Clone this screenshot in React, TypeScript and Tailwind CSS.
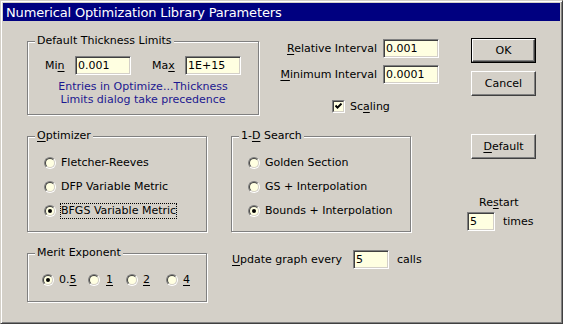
import { ReactNode } from "react";

function Field({ value, className = "" }: { value: string; className?: string }) {
  return (
    <div
      className={`flex h-[19px] items-center bg-[#ffffe1] pl-[2px] border border-t-[#808080] border-l-[#808080] border-b-white border-r-white shadow-[inset_1px_1px_0_#404040,inset_-1px_-1px_0_#d4d0c8] ${className}`}
    >
      {value}
    </div>
  );
}

function Radio({ checked }: { checked?: boolean }) {
  return (
    <div className="size-[12px] shrink-0 rounded-full border border-t-[#808080] border-l-[#808080] border-b-white border-r-white">
      <div className="flex size-full items-center justify-center rounded-full border border-t-[#404040] border-l-[#404040] border-b-[#d4d0c8] border-r-[#d4d0c8] bg-[#ffffe1]">
        {checked && <div className="size-[4px] rounded-full bg-black" />}
      </div>
    </div>
  );
}

function Checkbox({ checked }: { checked?: boolean }) {
  return (
    <div className="size-[13px] shrink-0 border border-t-[#808080] border-l-[#808080] border-b-white border-r-white">
      <div className="flex size-full items-center justify-center border border-t-[#404040] border-l-[#404040] border-b-[#d4d0c8] border-r-[#d4d0c8] bg-[#ffffe1]">
        {checked && (
          <svg width="7" height="7" viewBox="0 0 7 7">
            <path d="M0.5 2.5 L2.5 4.6 L6.5 0.6" stroke="black" strokeWidth="2" fill="none" />
          </svg>
        )}
      </div>
    </div>
  );
}

function Button({ children, isDefault }: { children: ReactNode; isDefault?: boolean }) {
  const face = (
    <div className="flex size-full items-center justify-center border border-t-white border-l-white border-b-[#404040] border-r-[#404040] shadow-[inset_-1px_-1px_0_#808080]">
      {children}
    </div>
  );
  if (isDefault) {
    return <div className="h-[25px] w-[65px] border border-black">{face}</div>;
  }
  return <div className="h-[25px] w-[65px]">{face}</div>;
}

function Group({
  label,
  className = "",
  children,
}: {
  label: ReactNode;
  className?: string;
  children?: ReactNode;
}) {
  return (
    <div
      className={`relative shrink-0 border border-[#808080] shadow-[inset_1px_1px_0_#fff,1px_1px_0_#fff] ${className}`}
    >
      <div className="absolute left-[7px] top-[-8px] bg-[#d4d0c8] px-[2px] leading-[13px] whitespace-nowrap">
        {label}
      </div>
      {children}
    </div>
  );
}

function RadioRow({
  label,
  checked,
  focused,
}: {
  label: string;
  checked?: boolean;
  focused?: boolean;
}) {
  return (
    <div className="flex h-[24px] items-center gap-[4px]">
      <Radio checked={checked} />
      <span
        className={`border leading-[14px] whitespace-nowrap ${
          focused ? "border-dotted border-black" : "border-transparent"
        }`}
      >
        {label}
      </span>
    </div>
  );
}

function U({ children }: { children: ReactNode }) {
  return <span className="underline underline-offset-[2px]">{children}</span>;
}

export default function App() {
  return (
    <div className="h-[324px] w-[563px] bg-[#d4d0c8] p-[2px] border border-t-[#d4d0c8] border-l-[#d4d0c8] border-b-[#404040] border-r-[#404040] shadow-[inset_1px_1px_0_#fff,inset_-1px_-1px_0_#808080] font-['DejaVu_Sans',sans-serif] text-[11px] leading-[13px] text-black">
      <div className="flex h-[18px] items-center bg-[#000080] pl-[3px] text-[13px] leading-[15px] tracking-[-0.15px] text-white whitespace-nowrap">
        Numerical Optimization Library Parameters
      </div>

      <div className="pl-[24px] pt-[17px]">
        {/* top row */}
        <div className="flex h-[96px] items-start">
          <Group label="Default Thickness Limits" className="mt-[3px] h-[74px] w-[232px]">
            <div className="flex items-center pl-[17px] pt-[14px]">
              <span className="w-[30px]">
                Mi<U>n</U>
              </span>
              <Field value="0.001" className="w-[56px]" />
              <span className="ml-[21px] w-[33px]">
                Ma<U>x</U>
              </span>
              <Field value="1E+15" className="w-[56px]" />
            </div>
            <div className="mt-[5px] text-center text-[#1c1890]">
              Entries in Optimize...Thickness
              <br />
              Limits dialog take precedence
            </div>
          </Group>

          <div className="flex w-[180px] flex-col items-end pt-[1px]">
            <div className="flex items-center gap-[6px]">
              <span>
                <U>R</U>elative Interval
              </span>
              <Field value="0.001" className="w-[56px]" />
            </div>
            <div className="mt-[7px] flex items-center gap-[6px]">
              <span>
                <U>M</U>inimum Interval
              </span>
              <Field value="0.0001" className="w-[56px]" />
            </div>
            <div className="mt-[16px] flex items-center gap-[5px] self-start pl-[73px]">
              <Checkbox checked />
              <span>
                Sc<U>a</U>ling
              </span>
            </div>
          </div>

          <div className="ml-[32px] flex flex-col gap-[8px]">
            <Button isDefault>OK</Button>
            <Button>Cancel</Button>
          </div>
        </div>

        {/* middle row */}
        <div className="flex h-[116px] items-start">
          <Group
            label={
              <>
                <U>O</U>ptimizer
              </>
            }
            className="mt-[2px] h-[96px] w-[180px]"
          >
            <div className="pl-[16px] pt-[14px]">
              <RadioRow label="Fletcher-Reeves" />
              <RadioRow label="DFP Variable Metric" />
              <RadioRow label="BFGS Variable Metric" checked focused />
            </div>
          </Group>

          <Group
            label={
              <>
                1-<U>D</U> Search
              </>
            }
            className="ml-[24px] mt-[2px] h-[96px] w-[180px]"
          >
            <div className="pl-[16px] pt-[14px]">
              <RadioRow label="Golden Section" />
              <RadioRow label="GS + Interpolation" />
              <RadioRow label="Bounds + Interpolation" checked />
            </div>
          </Group>

          <div className="ml-[56px] flex flex-col">
            <div className="ml-[4px]">
              <Button>
                <span>
                  <U>D</U>efault
                </span>
              </Button>
            </div>
            <div className="ml-[12px] mt-[37px]">
              Re<U>s</U>tart
            </div>
            <div className="mt-[3px] flex items-center">
              <Field value="5" className="w-[28px]" />
              <span className="ml-[8px]">times</span>
            </div>
          </div>
        </div>

        {/* bottom row */}
        <div className="flex items-start">
          <Group label="Merit Exponent" className="mt-[3px] h-[49px] w-[180px]">
            <div className="flex items-center pl-[14px] pt-[19px] leading-[14px]">
              <div className="flex w-[46px] items-center gap-[5px]">
                <Radio checked />
                <span>
                  0.<U>5</U>
                </span>
              </div>
              <div className="flex w-[38px] items-center gap-[6px]">
                <Radio />
                <U>1</U>
              </div>
              <div className="flex w-[40px] items-center gap-[5px]">
                <Radio />
                <U>2</U>
              </div>
              <div className="flex items-center gap-[5px]">
                <Radio />
                <U>4</U>
              </div>
            </div>
          </Group>

          <div className="ml-[25px] flex h-[19px] items-center">
            <span className="w-[121px]">
              <U>U</U>pdate graph every
            </span>
            <Field value="5" className="w-[36px]" />
            <span className="ml-[8px]">calls</span>
          </div>
        </div>
      </div>
    </div>
  );
}
